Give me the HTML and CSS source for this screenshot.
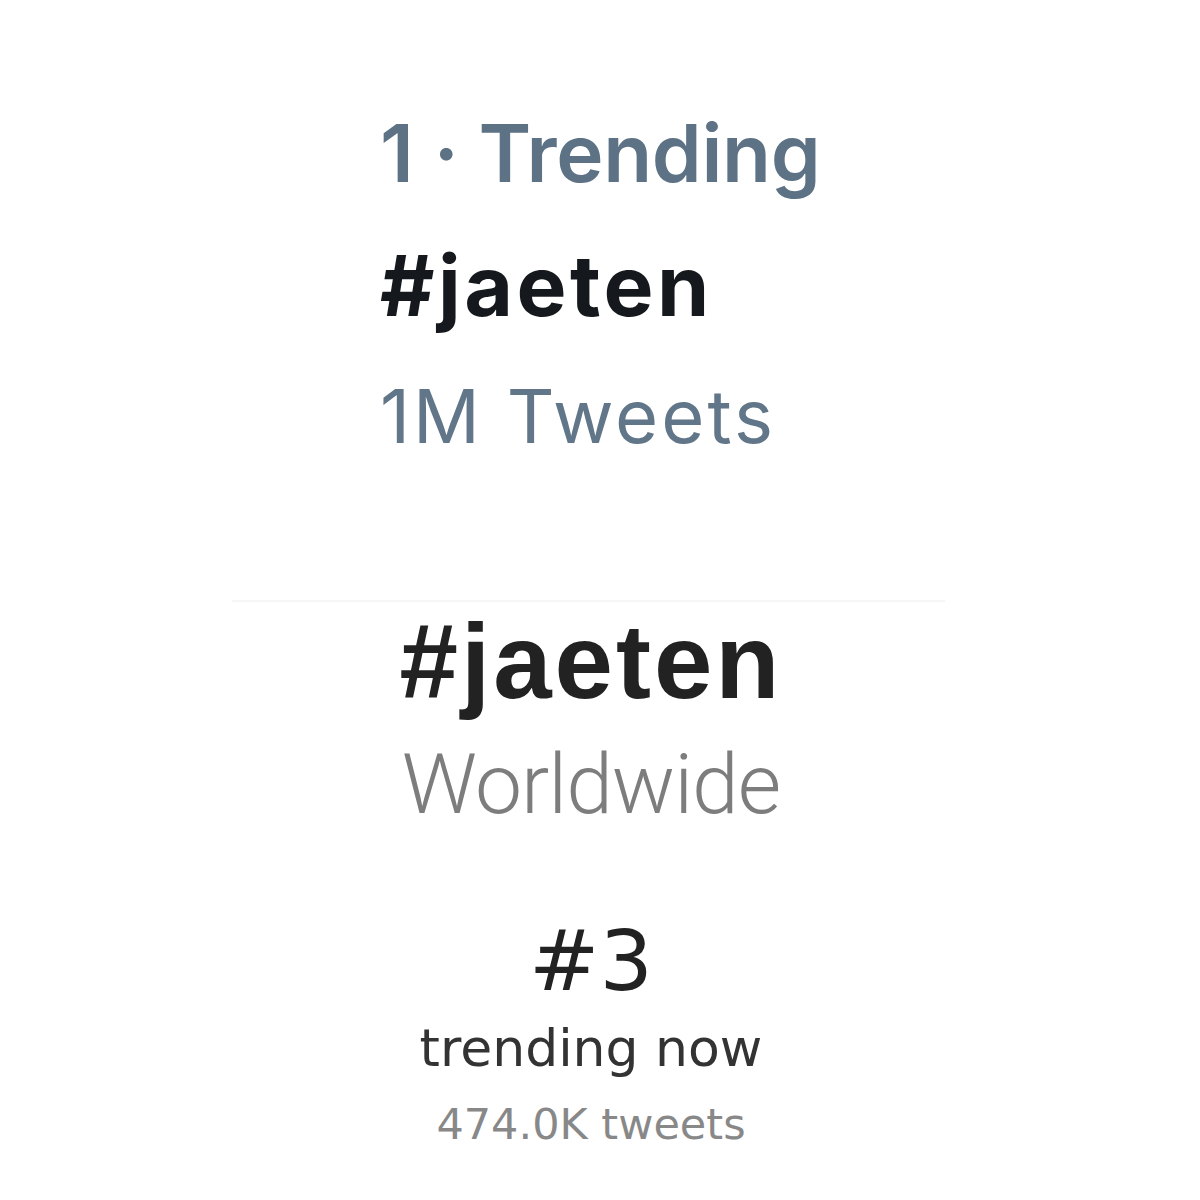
FILE: index.html
```html
<!DOCTYPE html>
<html lang="en">
<head>
<meta charset="utf-8">
<title>#jaeten trending</title>
<link rel="stylesheet" href="styles.css">
</head>
<body>
<main class="page">
  <section class="trend-card">
    <div class="trend-meta">1 · Trending</div>
    <div class="trend-tag">#jaeten</div>
    <div class="trend-count">1M Tweets</div>
  </section>
  <hr class="divider">
  <section class="stats">
    <div class="stats-tag">#jaeten</div>
    <div class="stats-region">Worldwide</div>
    <div class="stats-rank">#3</div>
    <div class="stats-label">trending now</div>
    <div class="stats-count">474.0K tweets</div>
  </section>
</main>
</body>
</html>
```
FILE: styles.css
```css
html, body {
  margin: 0;
  padding: 0;
  background: #ffffff;
}

.page {
  width: 1200px;
  height: 1200px;
  display: flex;
  flex-direction: column;
  overflow: hidden;
}

.trend-card {
  padding: 88px 0 0 380px;
  font-family: Inter, "Liberation Sans", sans-serif;
  display: flex;
  flex-direction: column;
}

.trend-meta {
  font-size: 80px;
  font-weight: 600;
  line-height: 130px;
  color: #5d7285;
  letter-spacing: -0.3px;
}

.trend-tag {
  font-size: 84px;
  font-weight: 700;
  line-height: 130px;
  margin-top: 3px;
  color: #15181c;
  letter-spacing: 3.5px;
}

.trend-count {
  font-size: 74px;
  font-weight: 400;
  line-height: 130px;
  color: #627689;
  letter-spacing: 3px;
}

.divider {
  margin: 119px 0 0 232px;
  width: 713px;
  height: 2px;
  border: 0;
  background: #f6f6f6;
}

.stats {
  margin-top: 10px;
  padding-right: 18px;
  display: flex;
  flex-direction: column;
  align-items: center;
  font-family: "DejaVu Sans", sans-serif;
}

.stats-tag {
  font-family: "Liberation Sans", Arial, sans-serif;
  font-size: 105px;
  font-weight: 700;
  line-height: 100px;
  color: #222222;
  letter-spacing: 3px;
}

.stats-region {
  margin-top: 23px;
  font-family: Roboto, "Liberation Sans", sans-serif;
  font-size: 84px;
  font-weight: 300;
  line-height: 100px;
  color: #7d7d7d;
  letter-spacing: -1px;
}

.stats-rank {
  margin-top: 76px;
  font-size: 84px;
  font-weight: 400;
  line-height: 100px;
  color: #222222;
}

.stats-label {
  margin-top: 2px;
  font-size: 52px;
  line-height: 70px;
  color: #333333;
}

.stats-count {
  margin-top: 11px;
  font-size: 43px;
  line-height: 60px;
  color: #888888;
}
```
